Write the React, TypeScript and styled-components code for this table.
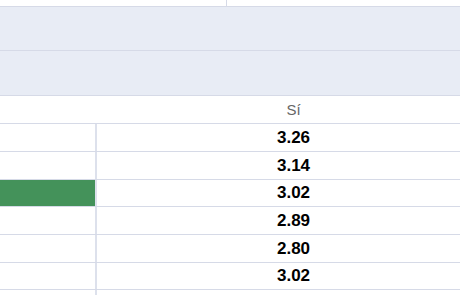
import React from 'react'
import styled, { createGlobalStyle } from 'styled-components'

const GlobalStyle = createGlobalStyle`
  html, body {
    margin: 0;
    padding: 0;
    background: #fff;
    overflow: hidden;
  }
  body {
    font-family: "Liberation Sans", Arial, sans-serif;
  }
`

const LINE = '#d6dae7'
const BAND = '#e8ecf5'

const Sheet = styled.div`
  width: 490px;
  display: flex;
  flex-direction: column;
`

const TopRow = styled.div`
  display: grid;
  grid-template-columns: 227px 1fr;
  height: 6px;
  border-bottom: 1px solid ${LINE};
`

const TopCell = styled.div<{ $divider?: boolean }>`
  border-right: ${(p) => (p.$divider ? `1px solid ${LINE}` : 'none')};
`

const Band = styled.div<{ $h: number }>`
  height: ${(p) => p.$h}px;
  background: ${BAND};
  border-bottom: 1px solid ${LINE};
`

const Row = styled.div<{ $h: number }>`
  display: grid;
  grid-template-columns: 97px 1fr;
  align-items: stretch;
  height: ${(p) => p.$h}px;
  border-bottom: 1px solid ${LINE};
`

const LabelCell = styled.div<{ $divider?: boolean; $fill?: string }>`
  background: ${(p) => p.$fill || 'transparent'};
  border-right: 2px solid ${(p) => (p.$divider ? '#dde1ec' : 'transparent')};
`

const HeaderText = styled.div`
  display: flex;
  align-items: center;
  justify-content: center;
  font-size: 15px;
  color: #666;
`

const ValueCell = styled.div`
  display: flex;
  align-items: center;
  justify-content: center;
  font-size: 17px;
  font-weight: 700;
  color: #000;
`

const rows = [
  { value: '3.26', h: 27 },
  { value: '3.14', h: 27 },
  { value: '3.02', h: 26, highlight: true },
  { value: '2.89', h: 27 },
  { value: '2.80', h: 27 },
  { value: '3.02', h: 26 },
  { value: '', h: 27 },
]

const App: React.FunctionComponent = () => {
  return (
    <>
      <GlobalStyle />
      <Sheet>
        <TopRow>
          <TopCell $divider />
          <TopCell />
        </TopRow>
        <Band $h={43} />
        <Band $h={44} />
        <Row $h={27}>
          <LabelCell />
          <HeaderText>Sí</HeaderText>
        </Row>
        {rows.map((r, i) => (
          <Row key={i} $h={r.h}>
            <LabelCell $divider $fill={r.highlight ? '#44925a' : undefined} />
            <ValueCell>{r.value}</ValueCell>
          </Row>
        ))}
      </Sheet>
    </>
  )
}

export default App
